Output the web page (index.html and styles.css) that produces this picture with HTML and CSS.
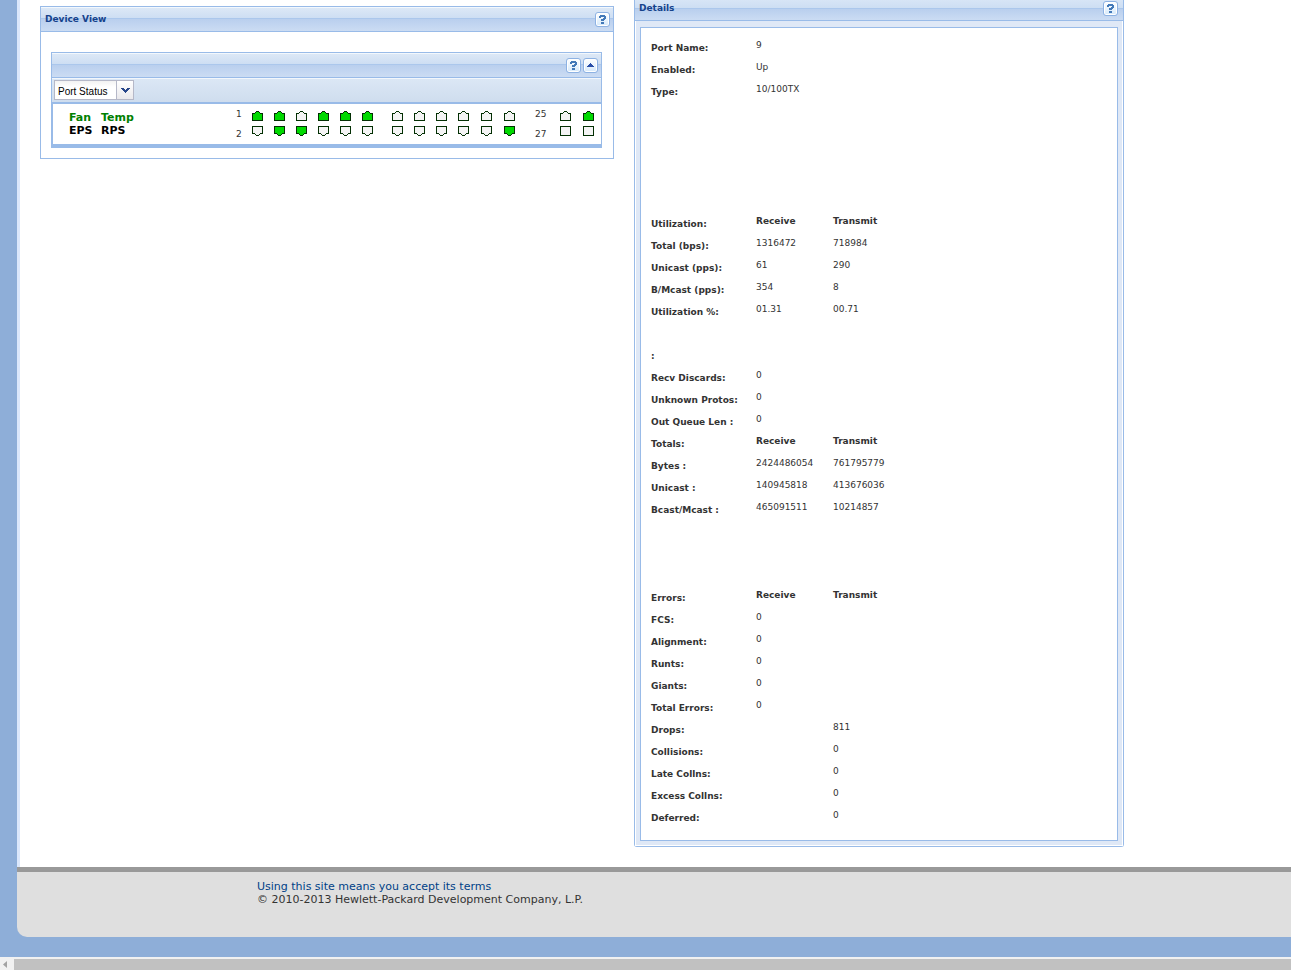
FILE: index.html
```html
<!DOCTYPE html>
<html lang="en">
<head>
<meta charset="utf-8">
<title>Device View</title>
<link rel="stylesheet" href="styles.css">
</head>
<body>
<svg class="defs" aria-hidden="true" shape-rendering="crispEdges">
  <symbol id="up" viewBox="0 0 11 10"><path fill="#032f03" d="M4 0h3v1h1v1h3v8H0V2h3V1h1z"/><path fill="currentColor" d="M4 1h3v1h1v1h2v6H1V3h2V2h1z"/></symbol>
  <symbol id="down" viewBox="0 0 11 10"><path fill="#032f03" d="M0 0h11v8H8v1H7v1H4V9H3V8H0z"/><path fill="currentColor" d="M1 1h9v6H8v1H7v1H4V8H3V7H1z"/></symbol>
  <symbol id="box" viewBox="0 0 11 10"><path fill="#032f03" d="M0 0h11v10H0z"/><path fill="currentColor" d="M1 1h9v8H1z"/></symbol>
  <symbol id="help" viewBox="0 0 15 15"><path fill="#4379b8" d="M5 3h5v1h1v3h-1v1H9v1H6V7h2V6h1V5H6v1H4V4h1zM6 10h3v2H6z"/></symbol>
  <symbol id="collapse" viewBox="0 0 15 15"><path fill="#2a4fa8" d="M7 5h1v1h1v1h1v1h1v1H4V8h1V7h1V6h1z"/></symbol>
</svg>
<div class="page">
  <main class="content">
    <section class="panel device">
      <header class="bar"><h2>Device View</h2><button class="tool" aria-label="Help"><svg><use href="#help"/></svg></button></header>
      <div class="device-body">
        <div class="switch">
          <div class="bar"><button class="tool" aria-label="Help"><svg><use href="#help"/></svg></button><button class="tool" aria-label="Collapse"><svg><use href="#collapse"/></svg></button></div>
          <div class="toolbar">
            <div class="combo">
              <select aria-label="View mode"><option>Port Status</option></select>
              <span class="trigger"><svg viewBox="0 0 9 5" shape-rendering="crispEdges"><path fill="#28478a" d="M0 0h3v1h1v1h1V1h1V0h3v1H8v1H7v1H6v1H5v1H4V4H3V3H2V2H1V1H0z"/></svg></span>
            </div>
          </div>
          <div class="front">
            <div class="status"><span class="ok">Fan</span><span class="ok">Temp</span><span>EPS</span><span>RPS</span></div>
            <div class="ports">
              <div class="nums"><span>1</span><span>2</span></div>
              <svg class="bank" viewBox="0 0 123 25" width="123" height="25" shape-rendering="crispEdges">
                <g class="on"><use href="#up" x="0" y="0" width="11" height="10"/><use href="#up" x="22" y="0" width="11" height="10"/><use href="#up" x="66" y="0" width="11" height="10"/><use href="#up" x="88" y="0" width="11" height="10"/><use href="#up" x="110" y="0" width="11" height="10"/><use href="#down" x="22" y="15" width="11" height="10"/><use href="#down" x="44" y="15" width="11" height="10"/></g>
                <g class="off"><use href="#up" x="44" y="0" width="11" height="10"/><use href="#down" x="0" y="15" width="11" height="10"/><use href="#down" x="66" y="15" width="11" height="10"/><use href="#down" x="88" y="15" width="11" height="10"/><use href="#down" x="110" y="15" width="11" height="10"/></g>
              </svg>
              <svg class="bank second" viewBox="0 0 123 25" width="123" height="25" shape-rendering="crispEdges">
                <g class="off"><use href="#up" x="0" y="0" width="11" height="10"/><use href="#up" x="22" y="0" width="11" height="10"/><use href="#up" x="44" y="0" width="11" height="10"/><use href="#up" x="66" y="0" width="11" height="10"/><use href="#up" x="89" y="0" width="11" height="10"/><use href="#up" x="112" y="0" width="11" height="10"/><use href="#down" x="0" y="15" width="11" height="10"/><use href="#down" x="22" y="15" width="11" height="10"/><use href="#down" x="44" y="15" width="11" height="10"/><use href="#down" x="66" y="15" width="11" height="10"/><use href="#down" x="89" y="15" width="11" height="10"/></g>
                <g class="on"><use href="#down" x="112" y="15" width="11" height="10"/></g>
              </svg>
              <div class="nums uplink"><span>25</span><span>27</span></div>
              <svg class="bank" viewBox="0 0 34 25" width="34" height="25" shape-rendering="crispEdges">
                <g class="off"><use href="#up" x="0" y="0" width="11" height="10"/><use href="#box" x="0" y="15" width="11" height="10"/><use href="#box" x="23" y="15" width="11" height="10"/></g>
                <g class="on"><use href="#up" x="23" y="0" width="11" height="10"/></g>
              </svg>
            </div>
          </div>
        </div>
      </div>
    </section>
    <section class="panel details">
      <header class="bar"><h2>Details</h2><button class="tool" aria-label="Help"><svg><use href="#help"/></svg></button></header>
      <div class="frame">
        <div class="sheet">
          <table>
            <colgroup><col class="c1"><col class="c2"><col></colgroup>
            <tbody>
              <tr><th>Port Name:</th><td>9</td><td></td></tr>
              <tr><th>Enabled:</th><td>Up</td><td></td></tr>
              <tr><th>Type:</th><td>10/100TX</td><td></td></tr>
              <tr class="blank-5"><td colspan="3"></td></tr>
            </tbody>
            <tbody>
              <tr><th>Utilization:</th><td class="head">Receive</td><td class="head">Transmit</td></tr>
              <tr><th>Total (bps):</th><td>1316472</td><td>718984</td></tr>
              <tr><th>Unicast (pps):</th><td>61</td><td>290</td></tr>
              <tr><th>B/Mcast (pps):</th><td>354</td><td>8</td></tr>
              <tr><th>Utilization %:</th><td>01.31</td><td>00.71</td></tr>
              <tr><td colspan="3"></td></tr>
              <tr><th>:</th><td></td><td></td></tr>
              <tr><th>Recv Discards:</th><td>0</td><td></td></tr>
              <tr><th>Unknown Protos:</th><td>0</td><td></td></tr>
              <tr><th>Out Queue Len :</th><td>0</td><td></td></tr>
            </tbody>
            <tbody>
              <tr><th>Totals:</th><td class="head">Receive</td><td class="head">Transmit</td></tr>
              <tr><th>Bytes :</th><td>2424486054</td><td>761795779</td></tr>
              <tr><th>Unicast :</th><td>140945818</td><td>413676036</td></tr>
              <tr><th>Bcast/Mcast :</th><td>465091511</td><td>10214857</td></tr>
              <tr class="blank-3"><td colspan="3"></td></tr>
            </tbody>
            <tbody>
              <tr><th>Errors:</th><td class="head">Receive</td><td class="head">Transmit</td></tr>
              <tr><th>FCS:</th><td>0</td><td></td></tr>
              <tr><th>Alignment:</th><td>0</td><td></td></tr>
              <tr><th>Runts:</th><td>0</td><td></td></tr>
              <tr><th>Giants:</th><td>0</td><td></td></tr>
              <tr><th>Total Errors:</th><td>0</td><td></td></tr>
              <tr><th>Drops:</th><td></td><td>811</td></tr>
              <tr><th>Collisions:</th><td></td><td>0</td></tr>
              <tr><th>Late Collns:</th><td></td><td>0</td></tr>
              <tr><th>Excess Collns:</th><td></td><td>0</td></tr>
              <tr><th>Deferred:</th><td></td><td>0</td></tr>
            </tbody>
          </table>
        </div>
      </div>
    </section>
  </main>
  <footer class="footer">
    <a href="#">Using this site means you accept its terms</a>
    <span>© 2010-2013 Hewlett-Packard Development Company, L.P.</span>
  </footer>
</div>
<div class="scroller"><button aria-label="Scroll left"><svg viewBox="0 0 4 7" width="4" height="7"><path fill="#a3a3a3" d="M4 0v7L0 3.5z"/></svg></button><div class="thumb"></div></div>
</body>
</html>
```

FILE: styles.css
```css
* { box-sizing: border-box; }
body {
  margin: 0;
  min-height: 100vh;
  display: flex;
  flex-direction: column;
  background: #8eaed8;
  color: #333;
  font: 9px/14px "DejaVu Sans", Verdana, sans-serif;
}
.defs { display: none; }
.page { flex: 1; padding: 0 0 20px 17px; display: flex; flex-direction: column; }
.content {
  flex: 1;
  display: grid;
  grid-template-columns: minmax(0, 574fr) minmax(0, 490fr);
  align-items: start;
  gap: 20px;
  padding: 0 167px 20px 20px;
  border-left: 3px solid #dbe7fb;
  background: #fff;
}
.panel { border: 1px solid #99bbe8; }
.bar {
  height: 25px;
  display: flex;
  align-items: center;
  justify-content: flex-end;
  gap: 2px;
  padding: 0 3px 0 4px;
  border-bottom: 1px solid #99bbe8;
  background: linear-gradient(#f3f8fd 0 1px, #dce8f6 1px, #cddef3 11px, #abc7ec 11px 12px, #b9cfee 12px, #cbdcf3 24px);
}
.bar h2 { margin: 0 auto 0 0; font-size: 9px; line-height: 14px; color: #15428b; }
.tool {
  width: 15px;
  height: 15px;
  padding: 0;
  display: grid;
  border: 1px solid #8db2e3;
  border-radius: 3px;
  background: linear-gradient(#fff, #d5e9fb);
  box-shadow: inset 0 0 0 1px #fff;
}
.tool svg { width: 15px; height: 15px; margin: -1px; shape-rendering: crispEdges; }

.device { margin-top: 6px; }
.device-body { padding: 20px 11px 10px 10px; }
.switch { border: 1px solid #99bbe8; border-bottom-width: 4px; }
.toolbar {
  padding: 1px 2px 2px;
  border-top: 1px solid #f3f7fc;
  border-bottom: 2px solid #99bbe8;
  background: linear-gradient(#dbe7f5, #cfddee);
}
.combo { width: 80px; display: grid; }
.combo select, .combo .trigger { grid-area: 1 / 1; }
.combo select {
  appearance: none;
  height: 20px;
  padding: 2px 18px 0 3px;
  border: 1px solid #b5b8c8;
  border-radius: 0;
  background: linear-gradient(#f2f2f2, #fff 6px);
  color: #000;
  font: 10px "Liberation Sans", Arial, sans-serif;
}
.trigger {
  justify-self: end;
  width: 18px;
  display: grid;
  place-items: center;
  border: 1px solid #b5b8c8;
  background: linear-gradient(#fff, #eae9ec);
  pointer-events: none;
}
.trigger svg { width: 9px; height: 5px; }
.front {
  display: flex;
  justify-content: space-between;
  height: 40px;
  padding: 7px 7px 0 16px;
  border-left: 1px solid #99bbe8;
  background: #fff;
}
.status {
  display: grid;
  grid-template-columns: 32px 40px;
  align-content: start;
  font: bold 11px/13px "DejaVu Sans", Verdana, sans-serif;
  color: #000;
}
.status .ok { color: #008000; }
.ports { display: flex; align-items: flex-start; }
.nums { width: 16px; margin-top: -4px; display: grid; grid-auto-rows: 20px; }
.uplink { width: 25px; margin-left: 20px; }
.second { margin-left: 17px; }
.on { color: #00d900; }
.off { color: #f4f4f4; }

.details { border-top: 0; border-radius: 0 0 3px 3px; }
.details .bar {
  height: 21px;
  align-items: flex-start;
  padding: 1px 5px 0 4px;
  background: linear-gradient(#d7e5f6, #cddef3 8px, #abc7ec 8px 9px, #b9cfee 9px, #cbdcf3 20px);
}
.frame { padding: 6px 4px 4px; border: 1px solid #fff; border-top: 0; background: #dfe8f6; }
.sheet { padding: 8px 10px 12px; border: 1px solid #99bbe8; background: #fff; }
table { width: 100%; table-layout: fixed; border-collapse: collapse; }
.c1 { width: 105px; }
.c2 { width: 77px; }
tr { height: 22px; }
th { padding: 5px 0 3px; text-align: left; white-space: nowrap; }
td { padding: 2px 0 6px; }
.head { font-weight: bold; }
.blank-5 { height: 110px; }
.blank-3 { height: 66px; }

.footer {
  min-height: 70px;
  padding: 8px 0 0 240px;
  display: flex;
  flex-direction: column;
  align-items: flex-start;
  border-top: 5px solid #999;
  border-bottom-left-radius: 10px;
  background: #dfdfdf;
  font: 11px/13px "DejaVu Sans", Verdana, sans-serif;
}
.footer a { color: #003f87; text-decoration: none; }
.scroller { height: 13px; display: flex; border-top: 2px solid #f1f1f1; background: #f1f1f1; }
.scroller button { width: 14px; padding: 0; border: 0; background: none; display: grid; place-items: center start; padding-left: 3px; }
.thumb { flex: 1; background: #c1c1c1; }
```
